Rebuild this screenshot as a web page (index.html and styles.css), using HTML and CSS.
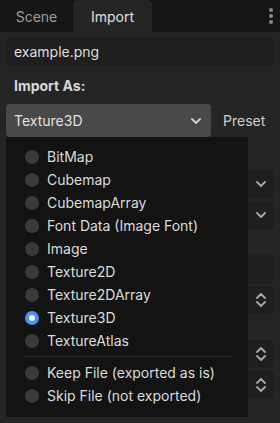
FILE: index.html
```html
<!DOCTYPE html>
<html lang="en">
<head>
    <meta charset="UTF-8">
    <meta name="viewport" content="width=device-width, initial-scale=1.0">
    <title>Import</title>
    <link rel="stylesheet" href="styles.css">
</head>
<body>
    <div class="dock">
        <div class="tabs">
            <div class="tab">Scene</div>
            <div class="tab active">Import</div>
            <div class="tab-menu">
                <span></span><span></span><span></span>
            </div>
        </div>
        <div class="panel">
            <div class="file-field">example.png</div>
            <div class="section-label">Import As:</div>
            <div class="import-row">
                <div class="dropdown">
                    <span>Texture3D</span>
                    <svg width="10" height="6" viewBox="0 0 10 6"><path d="M1 1 L5 5 L9 1" fill="none" stroke="#d0d0d0" stroke-width="1.8" stroke-linecap="round" stroke-linejoin="round"/></svg>
                </div>
                <span class="preset">Preset</span>
            </div>

            <!-- inspector properties, mostly hidden behind the popup -->
            <div class="props">
                <div class="prop-group">
                    <div class="prop"><svg width="10" height="6" viewBox="0 0 10 6"><path d="M1 1 L5 5 L9 1" fill="none" stroke="#a8a8a8" stroke-width="1.8" stroke-linecap="round" stroke-linejoin="round"/></svg></div>
                    <div class="prop"><svg width="10" height="6" viewBox="0 0 10 6"><path d="M1 1 L5 5 L9 1" fill="none" stroke="#a8a8a8" stroke-width="1.8" stroke-linecap="round" stroke-linejoin="round"/></svg></div>
                </div>
                <div class="prop-group">
                    <div class="prop"></div>
                    <div class="prop"><svg width="10" height="14" viewBox="0 0 10 14"><path d="M1 5 L5 1 L9 5 M1 9 L5 13 L9 9" fill="none" stroke="#a8a8a8" stroke-width="1.8" stroke-linecap="round" stroke-linejoin="round"/></svg></div>
                </div>
                <div class="prop-group">
                    <div class="prop"><svg width="10" height="14" viewBox="0 0 10 14"><path d="M1 5 L5 1 L9 5 M1 9 L5 13 L9 9" fill="none" stroke="#a8a8a8" stroke-width="1.8" stroke-linecap="round" stroke-linejoin="round"/></svg></div>
                    <div class="prop"><svg width="10" height="14" viewBox="0 0 10 14"><path d="M1 5 L5 1 L9 5 M1 9 L5 13 L9 9" fill="none" stroke="#a8a8a8" stroke-width="1.8" stroke-linecap="round" stroke-linejoin="round"/></svg></div>
                </div>
            </div>
        </div>

        <div class="popup">
            <div class="option"><span class="radio"></span>BitMap</div>
            <div class="option"><span class="radio"></span>Cubemap</div>
            <div class="option"><span class="radio"></span>CubemapArray</div>
            <div class="option"><span class="radio"></span>Font Data (Image Font)</div>
            <div class="option"><span class="radio"></span>Image</div>
            <div class="option"><span class="radio"></span>Texture2D</div>
            <div class="option"><span class="radio"></span>Texture2DArray</div>
            <div class="option"><span class="radio checked"></span>Texture3D</div>
            <div class="option"><span class="radio"></span>TextureAtlas</div>
            <div class="separator"></div>
            <div class="option"><span class="radio"></span>Keep File (exported as is)</div>
            <div class="option"><span class="radio"></span>Skip File (not exported)</div>
        </div>
    </div>
</body>
</html>
```
FILE: styles.css
```css
body {
    margin: 0;
    padding: 0;
    background-color: #252525;
    font-family: Inter, "Noto Sans", sans-serif;
    font-size: 14px;
    color: #dcdcdc;
}
.dock {
    position: relative;
    width: 280px;
    height: 423px;
    overflow: hidden;
}
.tabs {
    height: 32px;
    background-color: #161616;
    display: flex;
    align-items: stretch;
}
.tab {
    width: 73px;
    display: flex;
    align-items: center;
    justify-content: center;
    color: #9c9c9c;
}
.tab.active {
    width: 79px;
    background-color: #252525;
    border-radius: 5px 5px 0 0;
    color: #e0e0e0;
}
.tab-menu {
    margin-left: auto;
    width: 18px;
    display: flex;
    flex-direction: column;
    align-items: center;
    justify-content: center;
    gap: 2px;
}
.tab-menu span {
    width: 4px;
    height: 4px;
    border-radius: 50%;
    background-color: #8a8a8a;
}
.panel {
    padding: 5px 6px 0 6px;
}
.file-field {
    height: 29px;
    background-color: #1f1f1f;
    border-radius: 4px;
    padding-left: 8px;
    display: flex;
    align-items: center;
    color: #dedede;
}
.section-label {
    margin-top: 10px;
    line-height: 20px;
    padding-left: 8px;
    font-weight: bold;
    color: #d8d8d8;
}
.import-row {
    margin-top: 8px;
    display: flex;
    align-items: center;
    gap: 12px;
}
.dropdown {
    width: 205px;
    height: 33px;
    box-sizing: border-box;
    background-color: #494949;
    border-radius: 4px;
    padding: 0 10px 0 8px;
    display: flex;
    align-items: center;
    justify-content: space-between;
    color: #e2e2e2;
}
.preset {
    color: #cfcfcf;
}
.props {
    margin-top: 33px;
}
.prop-group {
    display: flex;
    flex-direction: column;
    gap: 3px;
    margin-bottom: 26px;
}
.prop {
    margin-left: 130px;
    height: 28px;
    background-color: #1f1f1f;
    border-radius: 4px;
    display: flex;
    align-items: center;
    justify-content: flex-end;
    padding-right: 8px;
}
.popup {
    position: absolute;
    left: 6px;
    top: 137px;
    width: 242px;
    height: 280px;
    box-sizing: border-box;
    background-color: #131313;
    padding-top: 8px;
}
.option {
    height: 23px;
    display: flex;
    align-items: center;
    gap: 8px;
    padding-left: 19px;
    color: #dcdcdc;
}
.radio {
    width: 14px;
    height: 14px;
    border-radius: 50%;
    background-color: #3a3a3a;
    flex-shrink: 0;
    box-sizing: border-box;
}
.radio.checked {
    background-color: #ffffff;
    border: 4px solid #4c8df6;
}
.separator {
    height: 1px;
    background-color: #2e2e2e;
    margin: 4px 17px 4px 17px;
}
```
